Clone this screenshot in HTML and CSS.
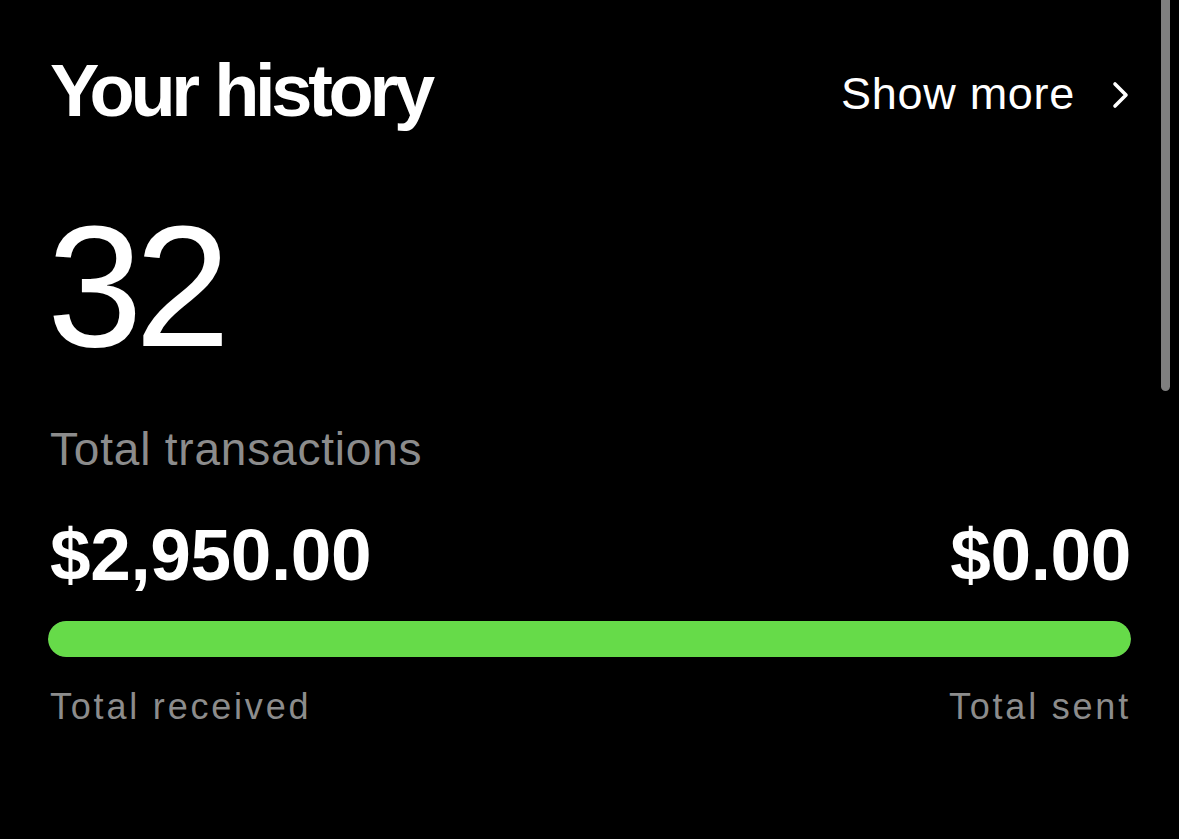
FILE: index.html
```html
<!DOCTYPE html>
<html lang="en">
<head>
<meta charset="UTF-8">
<meta name="viewport" content="width=device-width, initial-scale=1.0">
<title>Your history</title>
<link rel="stylesheet" href="styles.css">
</head>
<body>
<div class="history">
  <div class="history-head">
    <h1>Your history</h1>
    <a class="show-more" href="#">
      <span>Show more</span>
      <svg width="20" height="28" viewBox="0 0 20 28"><path d="M4 3 L15 14 L4 25" fill="none" stroke="#fff" stroke-width="3.6" stroke-linecap="round" stroke-linejoin="round"/></svg>
    </a>
  </div>

  <div class="count">32</div>
  <div class="count-label">Total transactions</div>

  <div class="amounts">
    <span>$2,950.00</span>
    <span>$0.00</span>
  </div>
  <div class="bar"><div class="bar-fill" style="width: 100%"></div></div>
  <div class="labels">
    <span>Total received</span>
    <span>Total sent</span>
  </div>
</div>
<!-- scrollbar overlay -->
<div class="scroll-thumb"></div>
</body>
</html>
```

FILE: styles.css
```css
html, body {
  margin: 0;
  height: 100%;
  background-color: #000;
  color: #fff;
  font-family: "Liberation Sans", Arial, sans-serif;
  overflow: hidden;
}

.history {
  padding: 51px 48px 0 50px;
}

.history-head {
  display: flex;
  justify-content: space-between;
  align-items: center;
}

.history-head h1 {
  margin: 0;
  font-size: 74px;
  line-height: 80px;
  font-weight: bold;
  letter-spacing: -4.3px;
  word-spacing: 2px;
}

.show-more {
  display: flex;
  align-items: center;
  gap: 36px;
  margin-top: 6px;
  color: #fff;
  text-decoration: none;
  font-size: 45px;
  line-height: 60px;
  letter-spacing: 0.7px;
}

.show-more svg {
  margin-top: 2px;
}

.count {
  margin-top: 69px;
  margin-left: -3px;
  font-size: 172px;
  line-height: 172px;
  letter-spacing: -8px;
}

.count-label {
  margin-top: 49px;
  font-size: 46px;
  line-height: 56px;
  color: #8c8c8c;
  letter-spacing: 0.8px;
}

.amounts {
  display: flex;
  justify-content: space-between;
  margin-top: 38px;
  font-size: 73px;
  line-height: 80px;
  font-weight: bold;
  letter-spacing: -0.4px;
}

.bar {
  margin-top: 26px;
  margin-left: -2px;
  height: 36px;
  border-radius: 18px;
  background-color: #333;
  overflow: hidden;
}

.bar-fill {
  height: 100%;
  background-color: #66db49;
  border-radius: 18px;
}

.labels {
  display: flex;
  justify-content: space-between;
  margin-top: 28px;
  font-size: 36px;
  line-height: 44px;
  color: #8c8c8c;
  letter-spacing: 2.8px;
}

.scroll-thumb {
  position: absolute;
  top: -6px;
  right: 9px;
  width: 9px;
  height: 397px;
  border-radius: 5px;
  background-color: #7f7f7f;
}
```
